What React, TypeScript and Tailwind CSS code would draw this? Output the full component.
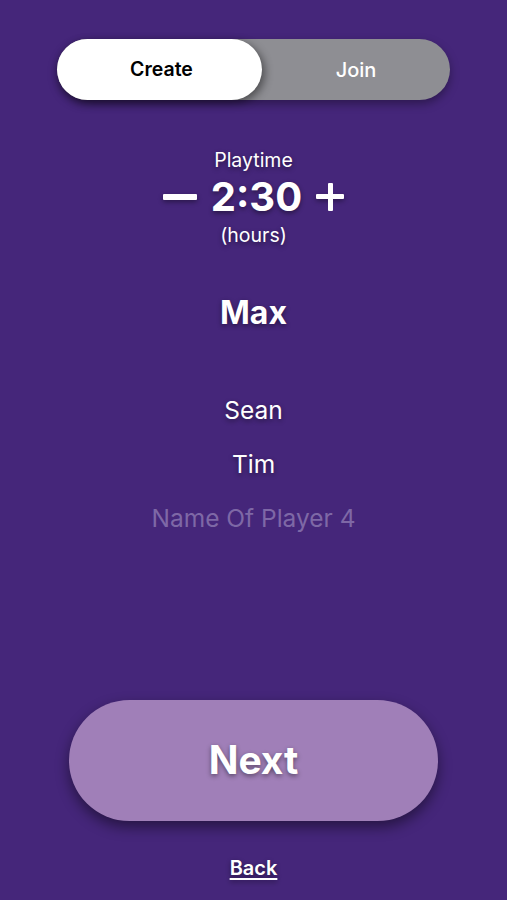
import React from "react";

export default function App() {
  const ts = "[text-shadow:0_2px_5px_rgba(0,0,0,0.45)]";
  return (
    <div
      className="w-[507px] h-[900px] bg-[#45267a] flex flex-col items-center overflow-hidden"
      style={{ fontFamily: "Inter, 'Open Sans', 'Liberation Sans', sans-serif" }}
    >
      <div className="mt-[39px] w-[393px] h-[61px] rounded-full bg-[#8e8e93] flex shadow-[0_4px_10px_rgba(0,0,0,0.35)]">
        <div className="w-[205px] h-full rounded-full bg-white flex items-center justify-center shadow-[3px_3px_8px_rgba(0,0,0,0.45)]">
          <span className="ml-[4px] text-[19.5px] font-semibold text-black">Create</span>
        </div>
        <div className="flex-1 flex items-center justify-center">
          <span className="text-[20px] font-medium text-white">Join</span>
        </div>
      </div>

      <div className={`mt-[49px] h-[22px] leading-[22px] text-[19.5px] text-white ${ts}`}>Playtime</div>
      <div className={`mt-[4px] h-[44px] leading-[44px] text-[40px] font-bold text-white flex items-center gap-[14px] ${ts}`}>
        <span className="inline-block w-[34px] h-[6px] bg-white rounded-[1px] shadow-[0_2px_5px_rgba(0,0,0,0.4)]"></span>
        <span>2:30</span>
        <span className="relative inline-block w-[28px] h-[28px]">
          <span className="absolute left-0 top-[11px] w-[28px] h-[5px] bg-white rounded-[1px] shadow-[0_2px_5px_rgba(0,0,0,0.4)]"></span>
          <span className="absolute left-[11.5px] top-0 w-[5px] h-[28px] bg-white rounded-[1px]"></span>
        </span>
      </div>
      <div className={`mt-[5px] h-[22px] leading-[22px] text-[19.5px] text-white ${ts}`}>(hours)</div>

      <div className={`mt-[48px] h-[38px] leading-[38px] text-[32px] font-bold text-white ${ts}`}>Max</div>

      <div className={`mt-[64px] h-[28px] leading-[28px] text-[24.5px] text-white ${ts}`}>Sean</div>
      <div className={`mt-[26px] h-[28px] leading-[28px] text-[24.5px] text-white ${ts}`}>Tim</div>
      <div className="mt-[26px] h-[28px] leading-[28px] text-[24.5px] text-[#7e68a6]">Name Of Player 4</div>

      <div className="mt-[168px] w-[369px] h-[121px] rounded-full bg-[#a07fb8] flex items-center justify-center shadow-[0_6px_14px_rgba(0,0,0,0.45)]">
        <span className={`text-[39px] font-bold text-white ${ts}`}>Next</span>
      </div>

      <div className={`mt-[35px] h-[24px] leading-[24px] text-[20px] font-semibold text-white underline underline-offset-[3px] ${ts}`}>Back</div>
    </div>
  );
}
